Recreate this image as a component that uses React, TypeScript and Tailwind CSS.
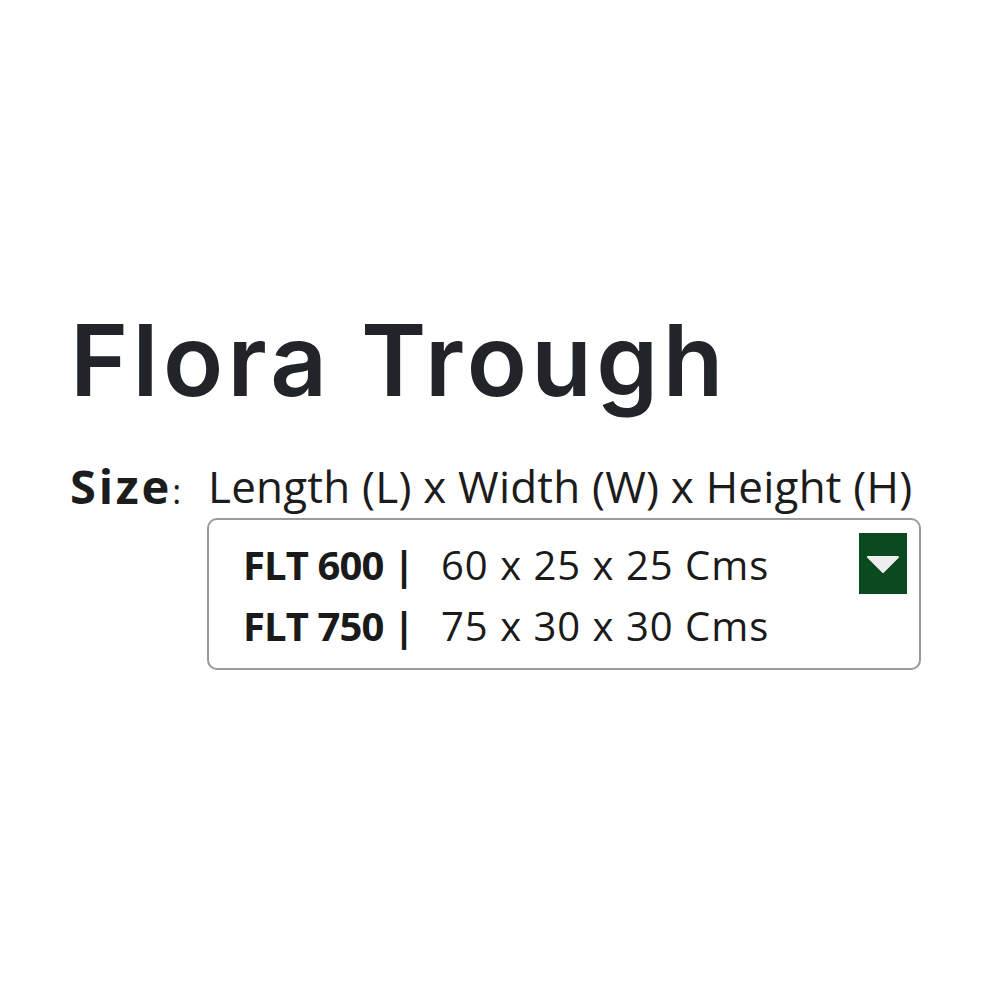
export default function App() {
  return (
    <div className="w-[1000px] h-[1000px] bg-white relative">
      <div className="pt-[300px] pl-[70px]">
        <h1 className="text-[99px] leading-[120px] font-semibold text-[#212428] tracking-[4.4px]" style={{ fontFamily: "Inter, sans-serif" }}>
          Flora Trough
        </h1>
        <div className="mt-[38px] flex items-start">
          <span className="text-[47px] leading-[56px] font-bold text-[#1c1c1c] w-[138px] tracking-[2.8px]" style={{ fontFamily: "'Open Sans', sans-serif" }}>
            Size<span className="font-normal text-[34px] tracking-normal">:</span>
          </span>
          <div className="flex flex-col">
            <div className="text-[44px] leading-[56px] text-[#1c1c1c] tracking-[0.2px] font-medium" style={{ fontFamily: "'Open Sans', sans-serif" }}>
              Length (L) x Width (W) x Height (H)
            </div>
            <div className="mt-[4px] ml-[-1px] w-[714px] h-[152px] border-2 border-[#9a9a9a] rounded-[10px] flex items-start justify-between pl-[34px] pr-[12px] pt-[14px]">
              <div className="flex flex-col text-[40px] leading-[61px] text-[#1a1a1a] tracking-[1px]" style={{ fontFamily: "'Open Sans', sans-serif" }}>
                <div className="flex">
                  <span className="font-bold w-[198px] tracking-[-0.9px]">FLT 600 |</span>
                  <span>60 x 25 x 25 Cms</span>
                </div>
                <div className="flex">
                  <span className="font-bold w-[198px] tracking-[-0.9px]">FLT 750 |</span>
                  <span>75 x 30 x 30 Cms</span>
                </div>
              </div>
              <div className="w-[48px] h-[61px] bg-[#0b4a1e] flex items-center justify-center mt-[-1px]">
                <svg width="34" height="18" viewBox="0 0 34 18">
                  <path d="M2 2 L32 2 L17 17 Z" fill="#eeeeee" stroke="#eeeeee" strokeWidth="2" strokeLinejoin="round" />
                </svg>
              </div>
            </div>
          </div>
        </div>
      </div>
    </div>
  );
}
